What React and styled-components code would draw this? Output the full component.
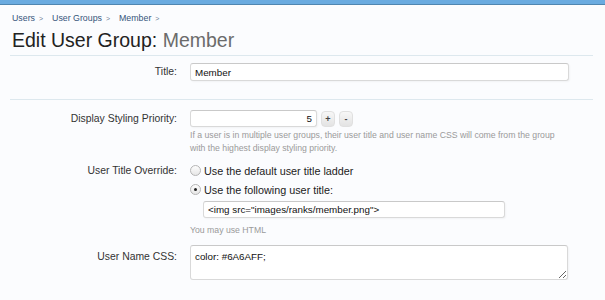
import React from "react";
import styled, { createGlobalStyle } from "styled-components";

const GlobalStyle = createGlobalStyle`
  html, body {
    margin: 0;
    padding: 0;
    background: #fbfcfe;
  }
  body {
    font-family: "Liberation Sans", Arial, sans-serif;
    color: #333;
  }
`;

const TopBar = styled.div`
  height: 4px;
  background: #6aabe0;
  border-bottom: 1px solid #4f86b0;
`;

const Page = styled.div`
  padding: 0 12px 0 10px;
`;

const Breadcrumb = styled.div`
  display: flex;
  gap: 9px;
  padding: 7px 0 0 2px;
  height: 12px;
  font-size: 8.8px;
  line-height: 12px;
`;

const Crumb = styled.span`
  color: #35557a;

  &::after {
    content: ">";
    margin-left: 4px;
    font-size: 7px;
    color: #6b7f95;
  }
`;

const Heading = styled.h1`
  margin: 4px 0 0;
  padding: 0 0 3px 2px;
  font-size: 19.5px;
  line-height: 24px;
  font-weight: normal;
  color: #222;
  border-bottom: 1px solid #dde8ee;
`;

const Muted = styled.span`
  color: #6b6b6b;
`;

const Row = styled.div`
  display: flex;
  gap: 13px;
  padding: ${({ $pad }) => $pad};
  border-bottom: ${({ $divider }) => ($divider ? "1px solid #dde8ee" : "none")};
`;

const Label = styled.div`
  flex: 0 0 167px;
  text-align: right;
  font-size: 10.4px;
  line-height: ${({ $lh }) => $lh || "18px"};
  padding-top: ${({ $top }) => $top || "0"};
  color: #333;
`;

const Control = styled.div`
  flex: 1;
  display: flex;
  flex-direction: column;
  align-items: flex-start;
`;

const TextInput = styled.input`
  box-sizing: border-box;
  width: ${({ $width }) => $width};
  height: ${({ $height }) => $height || "18px"};
  margin: ${({ $margin }) => $margin || "0"};
  padding: 0 4px;
  border: 1px solid #d9d9d9;
  border-top-color: #c9c9c9;
  border-radius: 3px;
  background: #fff;
  font-family: "Liberation Sans", Arial, sans-serif;
  font-size: 9.8px;
  color: #111;
  text-align: ${({ $align }) => $align || "left"};
  box-shadow: 1px 1px 2px rgba(0, 0, 0, 0.04);
  outline: none;
`;

const SpinRow = styled.div`
  display: flex;
  align-items: center;
  gap: 4px;
`;

const SpinButton = styled.button`
  box-sizing: border-box;
  width: 14px;
  height: 16px;
  padding: 0;
  border: 1px solid #e0e0e0;
  border-radius: 4px;
  background: linear-gradient(#f7f7f7, #e3e3e3);
  font-family: "Liberation Sans", Arial, sans-serif;
  font-size: 9px;
  font-weight: bold;
  line-height: 14px;
  color: #444;
`;

const Hint = styled.p`
  margin: ${({ $margin }) => $margin || "2px 0 0"};
  font-size: 8.7px;
  line-height: 13px;
  color: #9a9a9a;
`;

const Choice = styled.label`
  display: flex;
  align-items: center;
  gap: 3px;
  height: 19px;
  font-size: 10.8px;
  color: #222;
`;

const Radio = styled.span`
  box-sizing: border-box;
  position: relative;
  width: 11px;
  height: 11px;
  border-radius: 50%;
  border: 1px solid #b5b5b5;
  background: linear-gradient(#fdfdfd, #e6e6e6);

  &::after {
    content: "";
    display: ${({ $checked }) => ($checked ? "block" : "none")};
    position: absolute;
    left: 3px;
    top: 3px;
    width: 3px;
    height: 3px;
    border-radius: 50%;
    background: #222;
  }
`;

const TextArea = styled.textarea`
  box-sizing: border-box;
  width: 378px;
  height: 35px;
  padding: 4px 4px;
  border: 1px solid #d9d9d9;
  border-top-color: #c9c9c9;
  border-radius: 3px;
  background: #fff;
  font-family: "Liberation Sans", Arial, sans-serif;
  font-size: 9.8px;
  line-height: 13px;
  color: #111;
  box-shadow: 1px 1px 2px rgba(0, 0, 0, 0.04);
  outline: none;
`;

export default function App() {
  return (
    <>
      <GlobalStyle />
      <TopBar />
      <Page>
        <Breadcrumb>
          <Crumb>Users</Crumb>
          <Crumb>User Groups</Crumb>
          <Crumb>Member</Crumb>
        </Breadcrumb>
        <Heading>
          Edit User Group: <Muted>Member</Muted>
        </Heading>

        <Row $pad="7px 0 18px" $divider>
          <Label>Title:</Label>
          <Control>
            <TextInput $width="379px" defaultValue="Member" readOnly />
          </Control>
        </Row>

        <Row $pad="10px 0 0">
          <Label $lh="17px">Display Styling Priority:</Label>
          <Control>
            <SpinRow>
              <TextInput $width="127px" $height="17px" $align="right" defaultValue="5" readOnly />
              <SpinButton type="button">+</SpinButton>
              <SpinButton type="button">-</SpinButton>
            </SpinRow>
            <Hint>
              If a user is in multiple user groups, their user title and user name CSS will come from the group
              <br />
              with the highest display styling priority.
            </Hint>
          </Control>
        </Row>

        <Row $pad="6px 0 0">
          <Label $lh="19px">User Title Override:</Label>
          <Control>
            <Choice>
              <Radio />
              Use the default user title ladder
            </Choice>
            <Choice>
              <Radio $checked />
              Use the following user title:
            </Choice>
            <TextInput
              $width="302px"
              $height="17px"
              $margin="2px 0 0 13px"
              defaultValue={'<img src="images/ranks/member.png">'}
              readOnly
            />
            <Hint $margin="6px 0 0">You may use HTML</Hint>
          </Control>
        </Row>

        <Row $pad="8px 0 0">
          <Label $lh="13px" $top="5px">User Name CSS:</Label>
          <Control>
            <TextArea defaultValue="color: #6A6AFF;" readOnly />
          </Control>
        </Row>
      </Page>
    </>
  );
}
